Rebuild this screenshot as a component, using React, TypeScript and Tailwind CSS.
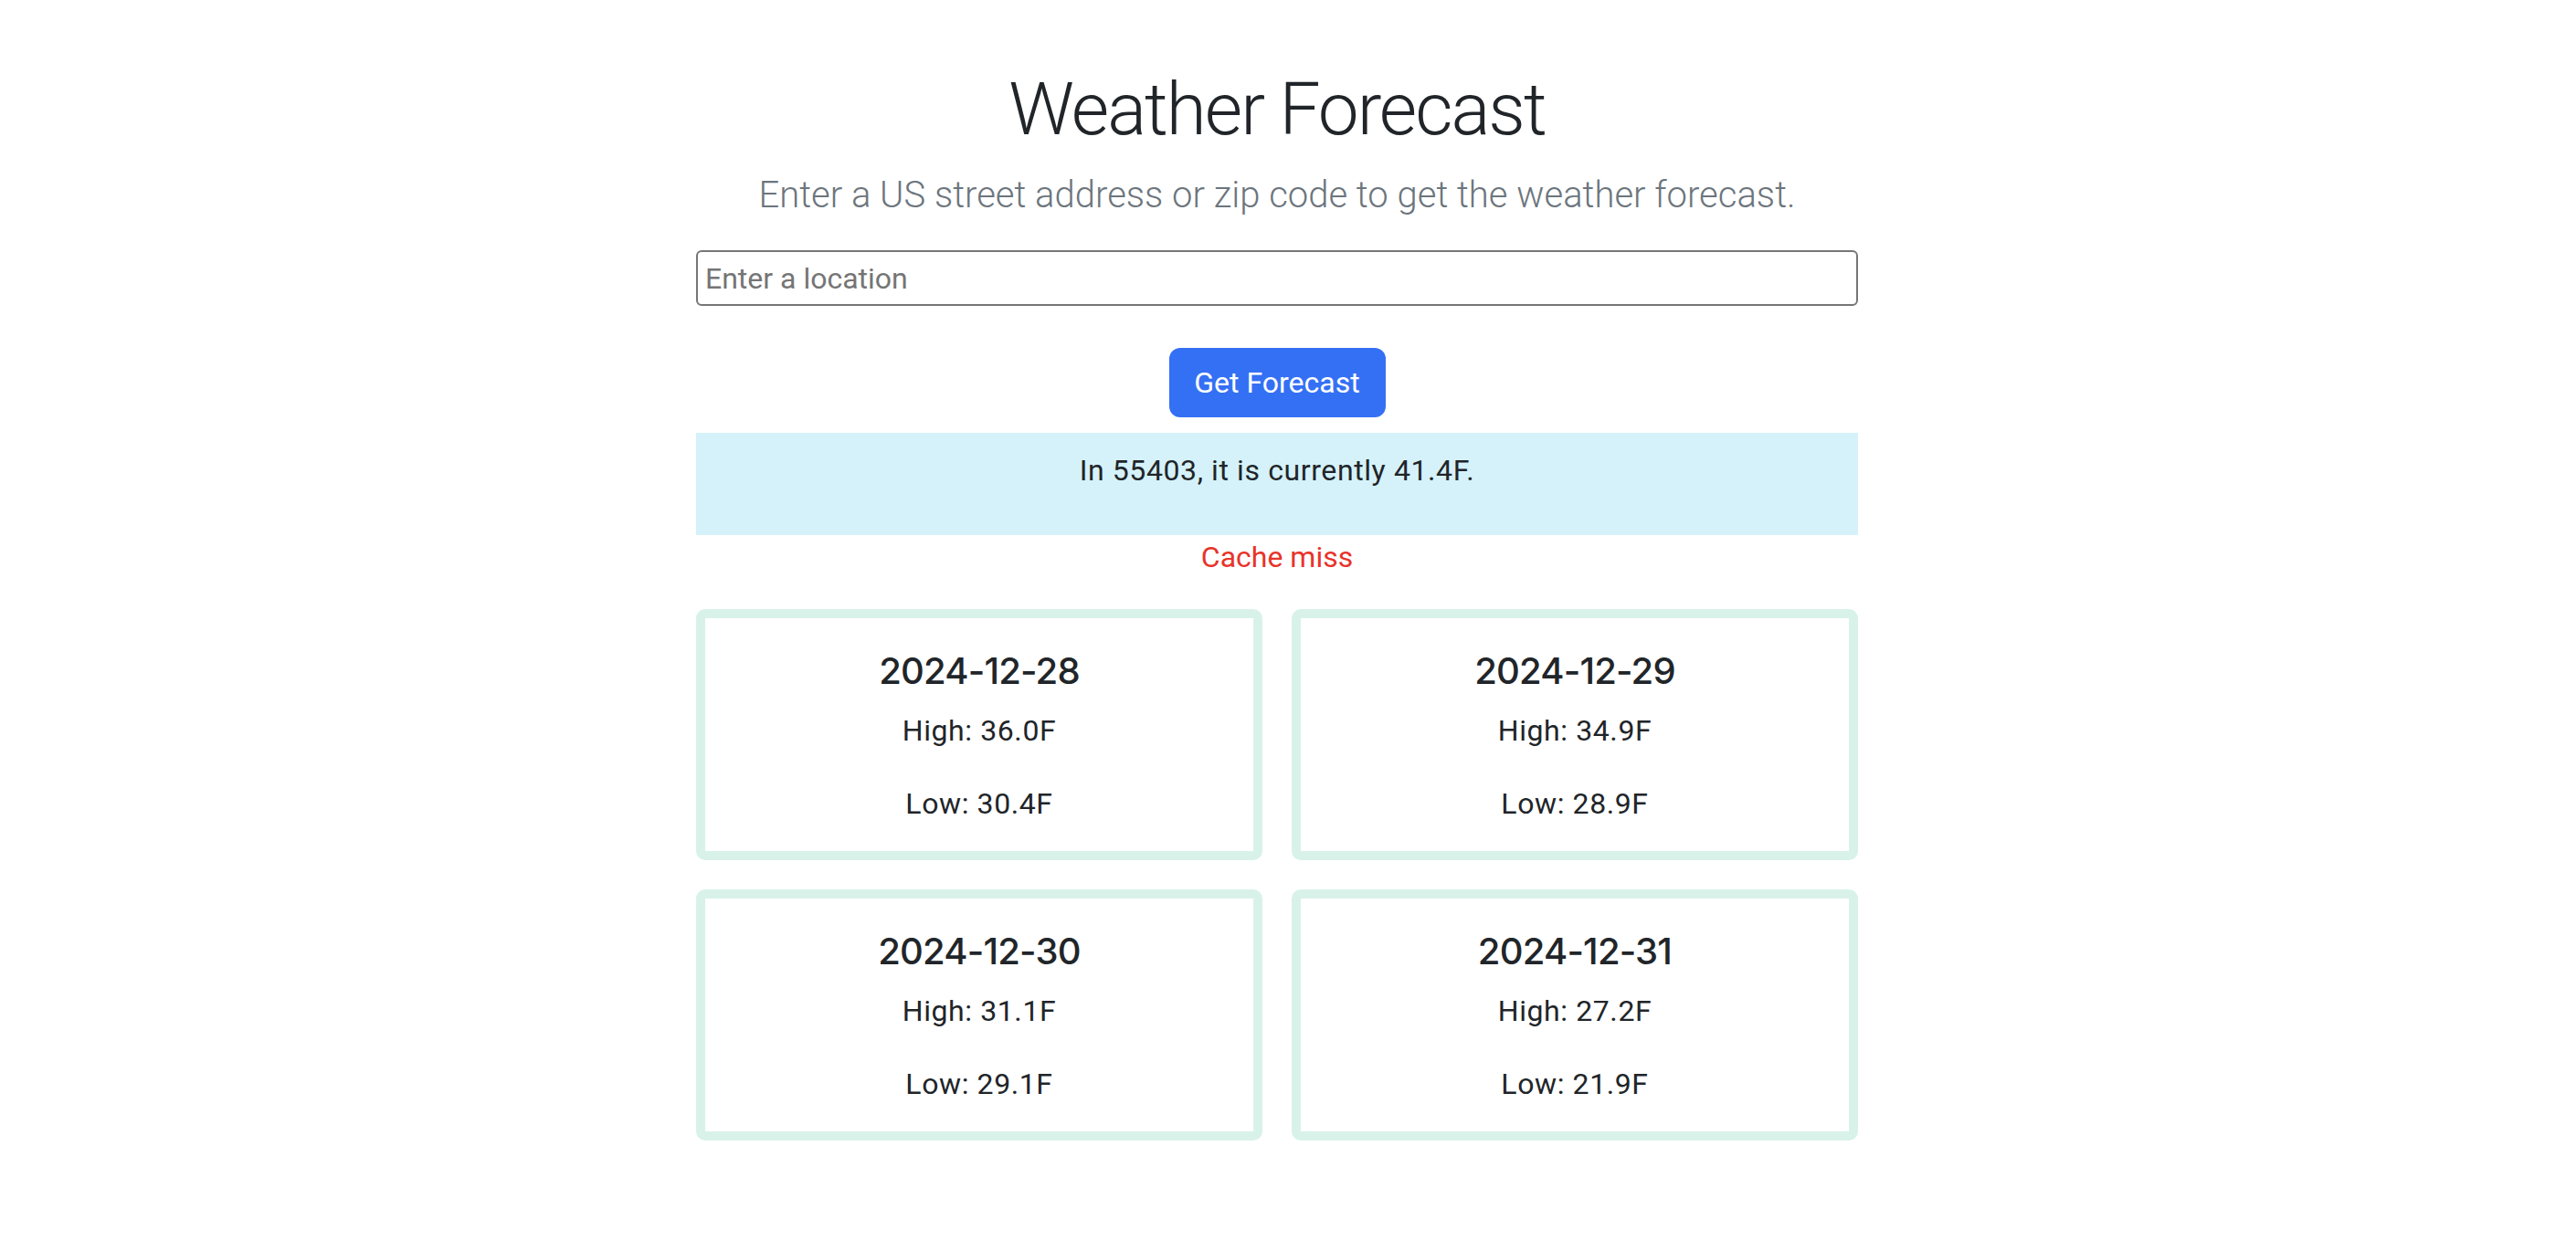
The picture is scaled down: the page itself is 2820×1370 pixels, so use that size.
import React from "react";

const forecasts = [
  { date: "2024-12-28", high: "36.0F", low: "30.4F" },
  { date: "2024-12-29", high: "34.9F", low: "28.9F" },
  { date: "2024-12-30", high: "31.1F", low: "29.1F" },
  { date: "2024-12-31", high: "27.2F", low: "21.9F" },
];

export default function App() {
  return (
    <div className="min-h-screen bg-white flex justify-center pr-[24px] font-['Roboto',sans-serif] text-[#212529]">
      <div className="w-[1272px] pt-[72px] flex flex-col items-center text-center">
        <h1 className="font-light text-[80px] leading-[96px] tracking-[-2px] mb-[16px]">
          Weather Forecast
        </h1>
        <p className="font-light text-[40px] leading-[60px] text-[#6c757d] mb-[30px]">
          Enter a US street address or zip code to get the weather forecast.
        </p>

        <input
          type="text"
          placeholder="Enter a location"
          className="w-full h-[61px] border-2 border-[#767676] rounded-[6px] px-[8px] text-[32px] placeholder:text-[#757575] focus:outline-none"
        />

        <button className="mt-[46px] h-[76px] w-[237px] rounded-[12px] bg-[#3470f4] text-white text-[32px] leading-[48px]">
          Get Forecast
        </button>

        {/* current conditions */}
        <div className="mt-[17px] w-full bg-[#d5f2fa] pt-[17px] pb-[15px]">
          <p className="text-[32px] leading-[48px] tracking-[0.6px] mb-[32px]">In 55403, it is currently 41.4F.</p>
        </div>
        <p className="text-[#e8332a] text-[32px] leading-[48px] mb-[33px]">Cache miss</p>

        <div className="grid grid-cols-2 gap-[32px] w-full">
          {forecasts.map((f) => (
            <div key={f.date} className="border-[10px] border-[#d8f2ea] rounded-[10px] pt-[34px]">
              <h5 className="font-['Inter',sans-serif] text-[40px] leading-[48px] font-medium tracking-[-0.8px] mb-[17px]">
                {f.date}
              </h5>
              <p className="text-[32px] leading-[48px] tracking-[0.6px] mb-[32px]">High: {f.high}</p>
              <p className="text-[32px] leading-[48px] tracking-[0.6px] mb-[28px]">Low: {f.low}</p>
            </div>
          ))}
        </div>
      </div>
    </div>
  );
}
